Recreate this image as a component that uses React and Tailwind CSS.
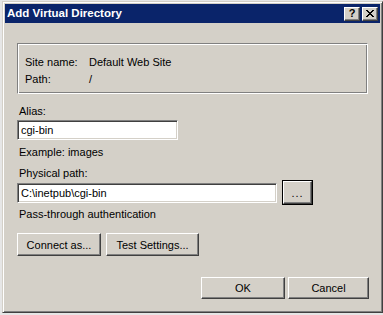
import React from 'react';

const raised =
  'bg-[#d4d0c8] border border-t-white border-l-white border-r-[#404040] border-b-[#404040] shadow-[inset_-1px_-1px_#808080]';
const sunken =
  'bg-white border border-t-[#808080] border-l-[#808080] border-r-white border-b-white shadow-[inset_1px_1px_#404040,inset_-1px_-1px_#d4d0c8]';

function Btn({ children, className = '' }) {
  return (
    <button className={`${raised} flex items-center justify-center text-[11px] text-black ${className}`}>
      {children}
    </button>
  );
}

function Field({ value, className = '' }) {
  return (
    <div className={`${sunken} h-[20px] flex items-center pl-[3px] text-[11px] text-black ${className}`}>
      {value}
    </div>
  );
}

function TitleBar() {
  return (
    <div className="h-[19px] bg-[#0a246a] flex items-center pl-[2px] pr-[2px]">
      <span className="text-white font-bold text-[11.5px] flex-1">Add Virtual Directory</span>
      <div className="flex gap-[2px]">
        <div className={`${raised} w-[16px] h-[14px] flex items-center justify-center text-[11px] font-bold leading-none`}>?</div>
        <div className={`${raised} w-[16px] h-[14px] flex items-center justify-center`}>
          <svg width="8" height="7" viewBox="0 0 8 7" shapeRendering="crispEdges">
            <path d="M0 0h2v1h-2zM6 0h2v1h-2zM1 1h2v1h-2zM5 1h2v1h-2zM2 2h4v1h-4zM3 3h2v1h-2zM2 4h4v1h-4zM1 5h2v1h-2zM5 5h2v1h-2zM0 6h2v1h-2zM6 6h2v1h-2z" fill="#000" />
          </svg>
        </div>
      </div>
    </div>
  );
}

export default function App() {
  return (
    <div
      className="w-[383px] h-[315px] bg-[#e6e6e6] pt-[1px] pl-[2px] overflow-hidden"
      style={{ fontFamily: '"Liberation Sans", Arial, sans-serif' }}
    >
      <div className="w-[381px] h-[312px] bg-[#d4d0c8] border border-t-[#d4d0c8] border-l-[#d4d0c8] border-r-[#404040] border-b-[#404040] shadow-[inset_1px_1px_white,inset_-1px_-1px_#808080] p-[2px]">
        <TitleBar />

        <div className="pl-[12px] pt-[20px] text-[11px] text-black leading-[14px]">
          <div className="w-[351px] h-[51px] border border-t-[#808080] border-l-[#808080] border-r-white border-b-white shadow-[inset_1px_1px_white,inset_-1px_-1px_#808080] pl-[7px] pt-[10px] leading-[17px]">
            <div className="flex">
              <span className="w-[64px]">Site name:</span>
              <span>Default Web Site</span>
            </div>
            <div className="flex">
              <span className="w-[64px]">Path:</span>
              <span>/</span>
            </div>
          </div>

          <div className="mt-[10px] pl-[2px]">Alias:</div>
          <Field value="cgi-bin" className="mt-[2px] w-[161px]" />
          <div className="mt-[5px] pl-[2px]">Example: images</div>

          <div className="mt-[7px] pl-[2px]">Physical path:</div>
          <div className="flex items-center gap-[6px] mt-[1px]">
            <Field value="C:\inetpub\cgi-bin" className="w-[260px]" />
            <Btn className="w-[29px] h-[23px] outline outline-1 outline-black -outline-offset-0 tracking-[1px]">...</Btn>
          </div>
          <div className="mt-[3px] pl-[2px]">Pass-through authentication</div>

          <div className="flex gap-[5px] mt-[12px]">
            <Btn className="w-[84px] h-[23px]">Connect as...</Btn>
            <Btn className="w-[93px] h-[23px]">Test Settings...</Btn>
          </div>

          <div className="flex justify-end gap-[3px] mt-[21px] pr-[11px]">
            <Btn className="w-[84px] h-[22px]">OK</Btn>
            <Btn className="w-[81px] h-[22px]">Cancel</Btn>
          </div>
        </div>
      </div>
    </div>
  );
}
